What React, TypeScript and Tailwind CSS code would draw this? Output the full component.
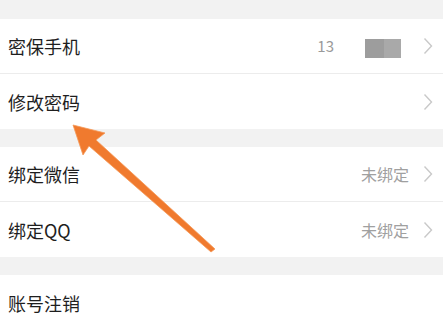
import React from 'react';

const Chevron = () => (
  <svg width="10" height="18" viewBox="0 0 10 18" className="shrink-0">
    <polyline points="1.5,1.5 8.5,9 1.5,16.5" fill="none" stroke="#c9c9c9" strokeWidth="1.4" />
  </svg>
);

interface RowProps {
  label: string;
  right?: React.ReactNode;
  divider?: boolean;
  chevron?: boolean;
}

const Row: React.FC<RowProps> = ({ label, right, divider, chevron = true }) => (
  <div className={`h-[55px] bg-white flex items-center pl-2 pr-[10px] ${divider ? 'border-b border-[#ececec]' : ''}`}>
    <span className="text-[18px] text-[#1e1e1e] leading-none">{label}</span>
    <div className="flex-1" />
    {right}
    {chevron && <Chevron />}
  </div>
);

export default function App() {
  return (
    <div
      className="relative w-[443px] h-[326px] overflow-hidden bg-[#f2f2f2]"
      style={{ fontFamily: '"Noto Sans CJK SC", "Noto Sans", sans-serif' }}
    >
      <div className="h-[19px]" />
      <Row
        label="密保手机"
        divider
        right={
          <div className="flex items-center mr-[22px]">
            <span className="text-[15px] text-[#9a9a9a] mr-[31px]">13</span>
            <div className="w-[36px] h-[19px] flex mt-[4px]">
              <div className="w-[19px] bg-[#9d9d9d]" />
              <div className="flex-1 bg-[#a9a9a9]" />
            </div>
          </div>
        }
      />
      <Row label="修改密码" />
      <div className="h-[18px]" />
      <Row
        label="绑定微信"
        divider
        right={<span className="text-[16px] text-[#a0a0a0] mr-[14px]">未绑定</span>}
      />
      <Row
        label="绑定QQ"
        right={<span className="text-[16px] text-[#a0a0a0] mr-[14px]">未绑定</span>}
      />
      <div className="h-[18px]" />
      <Row label="账号注销" chevron={false} />

      <svg className="absolute left-0 top-0" width="443" height="326" viewBox="0 0 443 326">
        <polygon
          points="73,125 105,133 96,140 215,249 211,252 89,146 83,155"
          fill="#f07a2e"
          stroke="#f59a5a"
          strokeWidth="0.8"
          strokeLinejoin="round"
        />
      </svg>
    </div>
  );
}
